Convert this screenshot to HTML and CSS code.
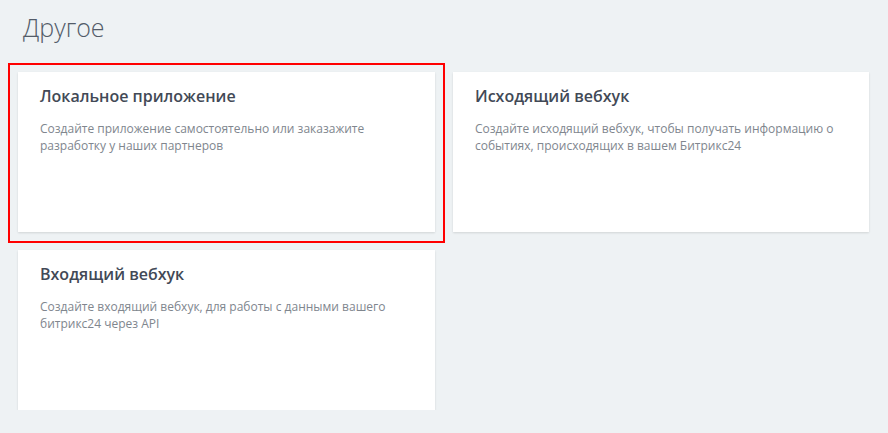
FILE: index.html
```html
<!DOCTYPE html>
<html lang="ru">
<head>
    <meta charset="UTF-8">
    <meta name="viewport" content="width=device-width, initial-scale=1.0">
    <title>Другое</title>
    <link rel="stylesheet" href="styles.css">
</head>
<body>
    <h1 class="section-title">Другое</h1>
    <div class="tiles">
        <div class="tile tile-selected">
            <div class="tile-name">Локальное приложение</div>
            <div class="tile-desc">Создайте приложение самостоятельно или заказажите разработку у наших партнеров</div>
        </div>
        <div class="tile">
            <div class="tile-name">Исходящий вебхук</div>
            <div class="tile-desc">Создайте исходящий вебхук, чтобы получать информацию о событиях, происходящих в вашем Битрикс24</div>
        </div>
        <div class="tile">
            <div class="tile-name">Входящий вебхук</div>
            <div class="tile-desc">Создайте входящий вебхук, для работы с данными вашего битрикс24 через API</div>
        </div>
    </div>
</body>
</html>
```

FILE: styles.css
```css
body {
    margin: 0;
    padding: 0 19px 0 18px;
    font-family: "Open Sans", "Liberation Sans", sans-serif;
    background-color: #eef2f4;
}

.section-title {
    margin: 0;
    padding: 10px 0 0 5px;
    height: 72px;
    box-sizing: border-box;
    font-size: 25px;
    font-weight: 300;
    line-height: 34px;
    color: #535c69;
}

.tiles {
    display: grid;
    grid-template-columns: 417px 416px;
    gap: 18px;
}

.tile {
    height: 160px;
    box-sizing: border-box;
    padding: 12px 22px 0;
    background-color: #fff;
    box-shadow: 0 1px 2px rgba(0, 0, 0, 0.12);
    position: relative;
}

.tile-selected::after {
    content: "";
    position: absolute;
    left: -10px;
    top: -9px;
    right: -10px;
    bottom: -11px;
    border: 2px solid #f00;
}

.tile-name {
    font-size: 16px;
    line-height: 24px;
    font-weight: 600;
    color: #424956;
}

.tile-desc {
    margin-top: 12px;
    font-size: 12px;
    line-height: 17px;
    color: #80868e;
}
```
